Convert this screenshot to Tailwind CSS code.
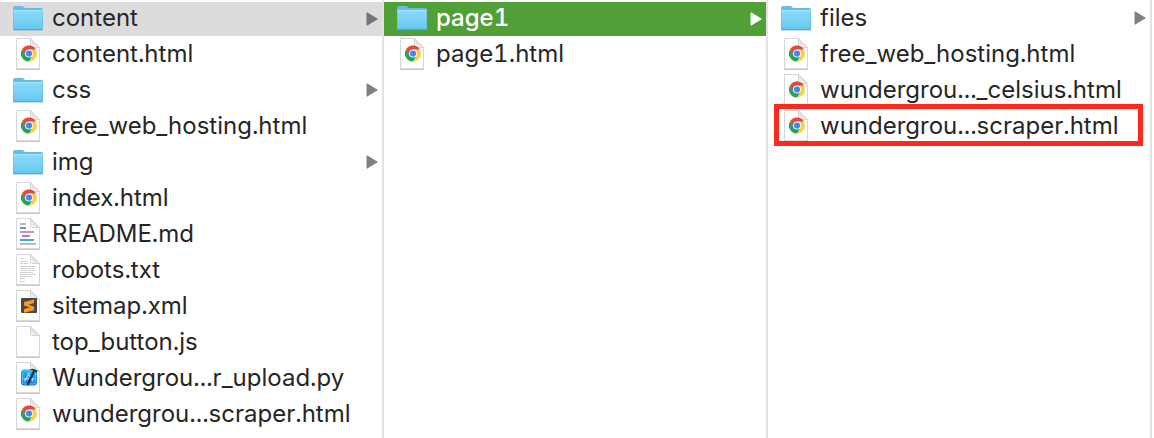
<!DOCTYPE html>
<html lang="en">
<head>
<meta charset="utf-8">
<meta name="viewport" content="width=device-width, initial-scale=1">
<title>Files</title>
<script src="https://cdn.jsdelivr.net/npm/@tailwindcss/browser@4"></script>
</head>
<body class="bg-white font-['Inter','Liberation_Sans',sans-serif] text-2xl text-[#262626] tabular-nums">
<svg class="absolute size-0" aria-hidden="true">
  <defs>
    <linearGradient id="blue" x1="0" y1="0" x2="0" y2="1"><stop offset="0" stop-color="#8adafa"/><stop offset="1" stop-color="#68c8f2"/></linearGradient>
    <linearGradient id="sky" x1="0" y1="0" x2="0" y2="1"><stop offset="0" stop-color="#20b0fc"/><stop offset="1" stop-color="#1670e8"/></linearGradient>
    <linearGradient id="fold" x1="0" y1="1" x2="1" y2="0"><stop offset="0" stop-color="#ffffff"/><stop offset=".5" stop-color="#dedede"/><stop offset="1" stop-color="#f4f4f4"/></linearGradient>
    <symbol id="folder" viewBox="0 0 32 36">
      <path d="M1 8q0-2 2-2h7q1 0 2 1l1 1h16q2 0 2 2v19q0 1-1 1H2q-1 0-1-1z" fill="#62bfe6"/>
      <path d="M1.500 11h29v17.500h-29z" fill="url(#blue)"/>
      <path d="M1 10.500h30" stroke="#a5e6fc"/>
      <path d="M1.500 29.800h29" stroke="#4a9fc6"/>
    </symbol>
    <symbol id="page" viewBox="0 0 32 36">
      <path d="M4 33.500h24" stroke="#000" stroke-opacity=".14"/>
      <path d="M4.500 2.500h14l9 9V33h-23z" fill="#fff" stroke="#d6d6d6"/>
      <path d="M4.500 33h23" stroke="#b8b8b8" stroke-width=".8"/>
    </symbol>
    <symbol id="corner" viewBox="0 0 32 36">
      <path d="M18.500 2.500v8q0 1 1 1h8z" fill="url(#fold)" stroke="#cecece" stroke-width=".8"/>
    </symbol>
    <symbol id="chrome" viewBox="0 0 32 36">
      <use href="#page"/><use href="#corner"/>
      <circle cx="17" cy="17.500" r="8" fill="#fbd04b"/>
      <path d="M10.070 13.500A8 8 0 0 0 17 25.500L20.460 19.500L17 17.500L13.540 19.500z" fill="#1ea362"/>
      <path d="M10.070 13.500A8 8 0 0 1 23.930 13.500H17V17.500L13.540 19.500z" fill="#dd4b3e"/>
      <circle cx="17" cy="17.500" r="4" fill="#f4f7fb"/>
      <circle cx="17" cy="17.500" r="3.100" fill="#4285f4"/>
    </symbol>
    <symbol id="markdown" viewBox="0 0 32 36">
      <use href="#page"/><use href="#corner"/>
      <g stroke-width="2"><path d="M8 8h6M8 28h16" stroke="#b9b9b9"/><path d="M8 12h6M8 24h14" stroke="#46a9b8"/><path d="M8 16h14" stroke="#db9299"/><path d="M10 20h8" stroke="#a17bfb"/></g>
    </symbol>
    <symbol id="plain" viewBox="0 0 32 36">
      <use href="#page"/><use href="#corner"/>
      <path d="M8 6.500h3M8 9.500h8M8 11.500h9M8 14.500h15M8 16.500h14M8 18.500h16M8 20.500h13M8 22.500h16M8 24.500h12M8 26.500h5M8 29.500h5" stroke="#cdcdcd" stroke-dasharray="3 .5 4 .4"/>
    </symbol>
    <symbol id="sublime" viewBox="0 0 32 36">
      <use href="#page"/><use href="#corner"/>
      <rect x="9" y="10" width="16" height="15" rx="1" fill="#484848"/>
      <path d="M22 11.500v3.600l-5.600 1.700 5.600 1.800v3.600l-10 2.500v-3.500l5.700-1.900-5.700-1.700v-3.500z" fill="#ff9820"/>
    </symbol>
    <symbol id="blank" viewBox="0 0 32 36"><use href="#page"/><use href="#corner"/></symbol>
    <symbol id="xcode" viewBox="0 0 32 36">
      <use href="#page"/><use href="#corner"/>
      <rect x="9" y="9.500" width="16" height="16" rx="3.500" fill="url(#sky)"/>
      <rect x="10.500" y="11" width="13" height="13" rx="2.500" fill="none" stroke="#7bc8ff" stroke-width=".7"/>
      <path d="M17.500 12.500l-5 9M15.500 12.500l5.500 9M11.500 18.800h11" stroke="#a9dcff" stroke-width="1.300" fill="none"/>
      <path d="M22 11l-6.500 14" stroke="#202a35" stroke-width="2"/>
      <path d="M18 9.500q3-1.500 5.500.3l2 .7-.8 2-2-.7q-2-1.800-4.700-2.300z" fill="#28323c"/>
    </symbol>
    <symbol id="arrow" viewBox="0 0 12 14"><path d="M1 .8v12.400L11.300 7z" fill="currentColor" stroke="currentColor" stroke-linejoin="round"/></symbol>
  </defs>
</svg>
<main class="grid min-h-screen grid-cols-3 pr-[2px]">
  <ul class="min-w-0 border-r-2 border-[#e3e3e3]" aria-label="Site root">
    <li class="h-9 pt-[2px]"><a href="#content" class="flex h-full items-center bg-[#dcdcdc] pr-1 pl-3"><svg class="-mt-[2px] mr-2 h-9 w-8 shrink-0"><use href="#folder"/></svg><span class="-mt-[2px] grow truncate">content</span><svg class="h-3.5 w-3 shrink-0 text-[#737373]"><use href="#arrow"/></svg></a></li>
    <li><a href="#content.html" class="flex h-9 items-center px-3"><svg class="mr-2 h-9 w-8 shrink-0"><use href="#chrome"/></svg><span class="truncate">content.html</span></a></li>
    <li><a href="#css" class="flex h-9 items-center pr-1 pl-3"><svg class="mr-2 h-9 w-8 shrink-0"><use href="#folder"/></svg><span class="grow truncate">css</span><svg class="h-3.5 w-3 shrink-0 text-[#808080]"><use href="#arrow"/></svg></a></li>
    <li><a href="#free" class="flex h-9 items-center px-3"><svg class="mr-2 h-9 w-8 shrink-0"><use href="#chrome"/></svg><span class="truncate">free_web_hosting.html</span></a></li>
    <li><a href="#img" class="flex h-9 items-center pr-1 pl-3"><svg class="mr-2 h-9 w-8 shrink-0"><use href="#folder"/></svg><span class="grow truncate">img</span><svg class="h-3.5 w-3 shrink-0 text-[#808080]"><use href="#arrow"/></svg></a></li>
    <li><a href="#index" class="flex h-9 items-center px-3"><svg class="mr-2 h-9 w-8 shrink-0"><use href="#chrome"/></svg><span class="truncate">index.html</span></a></li>
    <li><a href="#readme" class="flex h-9 items-center px-3"><svg class="mr-2 h-9 w-8 shrink-0"><use href="#markdown"/></svg><span class="truncate">README.md</span></a></li>
    <li><a href="#robots" class="flex h-9 items-center px-3"><svg class="mr-2 h-9 w-8 shrink-0"><use href="#plain"/></svg><span class="truncate">robots.txt</span></a></li>
    <li><a href="#sitemap" class="flex h-9 items-center px-3"><svg class="mr-2 h-9 w-8 shrink-0"><use href="#sublime"/></svg><span class="truncate">sitemap.xml</span></a></li>
    <li><a href="#top" class="flex h-9 items-center px-3"><svg class="mr-2 h-9 w-8 shrink-0"><use href="#blank"/></svg><span class="truncate">top_button.js</span></a></li>
    <li><a href="#upload" class="flex h-9 items-center px-3"><svg class="mr-2 h-9 w-8 shrink-0"><use href="#xcode"/></svg><span class="truncate">Wundergrou...r_upload.py</span></a></li>
    <li><a href="#scraper" class="flex h-9 items-center px-3"><svg class="mr-2 h-9 w-8 shrink-0"><use href="#chrome"/></svg><span class="truncate">wundergrou...scraper.html</span></a></li>
  </ul>
  <ul class="min-w-0 border-r-2 border-[#e3e3e3]" aria-label="content">
    <li class="h-9 pt-[2px]"><a href="#page1" class="flex h-full items-center bg-[#519f37] pr-1 pl-3 font-medium text-white"><svg class="-mt-[2px] mr-2 h-9 w-8 shrink-0"><use href="#folder"/></svg><span class="-mt-[2px] grow truncate">page1</span><svg class="h-3.5 w-3 shrink-0"><use href="#arrow"/></svg></a></li>
    <li><a href="#page1.html" class="flex h-9 items-center px-3"><svg class="mr-2 h-9 w-8 shrink-0"><use href="#chrome"/></svg><span class="truncate">page1.html</span></a></li>
  </ul>
  <ul class="min-w-0 border-r-2 border-[#e3e3e3]" aria-label="page1">
    <li><a href="#files" class="flex h-9 items-center pr-1 pl-3"><svg class="mr-2 h-9 w-8 shrink-0"><use href="#folder"/></svg><span class="grow truncate">files</span><svg class="h-3.5 w-3 shrink-0 text-[#808080]"><use href="#arrow"/></svg></a></li>
    <li><a href="#free2" class="flex h-9 items-center px-3"><svg class="mr-2 h-9 w-8 shrink-0"><use href="#chrome"/></svg><span class="truncate">free_web_hosting.html</span></a></li>
    <li><a href="#celsius" class="flex h-9 items-center px-3"><svg class="mr-2 h-9 w-8 shrink-0"><use href="#chrome"/></svg><span class="truncate">wundergrou..._celsius.html</span></a></li>
    <li class="relative"><a href="#scraper2" class="flex h-9 items-center px-3"><svg class="mr-2 h-9 w-8 shrink-0"><use href="#chrome"/></svg><span class="truncate">wundergrou...scraper.html</span></a><span class="pointer-events-none absolute -top-1 right-[7px] -bottom-[2px] left-[6px] border-5 border-[#fb2a1c]"></span></li>
  </ul>
</main>
</body>
</html>
